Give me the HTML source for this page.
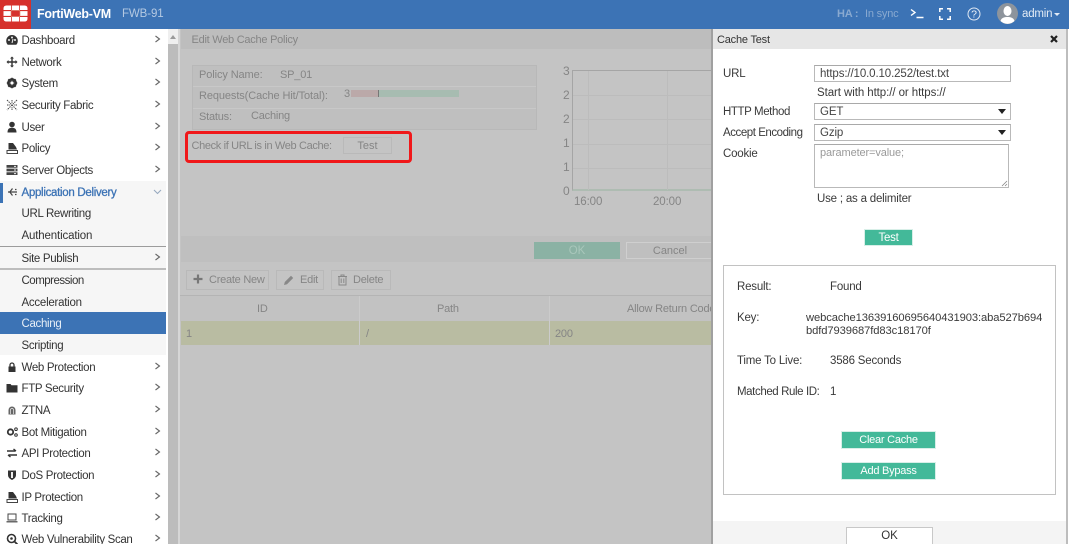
<!DOCTYPE html>
<html><head><meta charset="utf-8"><style>
*{box-sizing:border-box}
html,body{margin:0;padding:0;width:1069px;height:544px;overflow:hidden;background:#fff}
body{position:relative;font-family:"Liberation Sans",sans-serif;font-size:11.5px;color:#3a3a3a}
.a{position:absolute}
.t{position:absolute;white-space:nowrap;line-height:14px;margin-top:1px;letter-spacing:-.2px}
.g{color:#858585}
.m{position:absolute;left:0;width:166px;height:22px;line-height:22px;white-space:nowrap;color:#333;font-size:11.5px;letter-spacing:-.33px}
.m span{position:absolute;left:21.5px;top:1px}
.m svg.i{position:absolute;left:6px;top:5px;width:12px;height:12px}
.m svg.c{position:absolute;left:154px;top:6px;width:7px;height:8px}
.gb{position:absolute;background:#43b999;color:#fff;text-align:center;border:1px solid #d8efe8;white-space:nowrap;letter-spacing:-.25px}
.ib{position:absolute;background:#fff;border:1px solid #b9b9b9;border-top-color:#a9a9a9;padding-left:5px;color:#444;white-space:nowrap;letter-spacing:-.12px}
.tb{position:absolute;top:270px;height:20px;border:1px solid #b9b9b9;color:#858585;line-height:19px;white-space:nowrap;letter-spacing:-.25px}
</style></head><body>
<svg width="0" height="0" style="position:absolute"><defs><path id="ch" d="M1.5 1l4 3-4 3" fill="none" stroke="#666" stroke-width="1.1"/></defs></svg>
<!-- top bar -->
<div class="a" style="left:0;top:0;width:1069px;height:29px;background:#3c73b5"></div>
<div class="a" style="left:0;top:0;width:31px;height:29px;background:#d6302b"></div>
<svg class="a" style="left:3px;top:5px" width="25" height="17" viewBox="0 0 25 17"><path d="M0.500 5V3.500Q.5.500 3.500.500H8V5zM8.800.500H16.200V5H8.800zM17 .500h4.500Q24.500.500 24.500 3.500V5H17zM.5 6.100H7.800V10.900H.5zM17.200 6.100H24.500V10.900H17.200zM.5 12H8V16.500H3.500Q.5 16.500.5 13.500zM8.800 12H16.200V16.500H8.800zM17 12H24.500V13.500Q24.500 16.500 21.500 16.500H17z" fill="#fff"/><path d="M8 5.500h9M8 11.500h9M7.900 6v5M17.100 6v5" stroke="#e8b9a0" stroke-width=".6" fill="none"/></svg>
<div class="t" style="left:37px;top:6px;color:#fff;font-weight:bold;font-size:12.5px;letter-spacing:-.27px">FortiWeb-VM</div>
<div class="t" style="left:122px;top:6px;color:#b4c9e2;font-size:11.5px;letter-spacing:-.1px">FWB-91</div>
<div class="t" style="left:837px;top:6px;color:#89a9d0;font-weight:bold;font-size:11px">HA :</div>
<div class="t" style="left:865px;top:6px;color:#89a9d0;font-size:11px">In sync</div>
<svg class="a" style="left:910px;top:8px" width="14" height="12" viewBox="0 0 14 12"><path d="M1 1.500l4 3-4 3M6.500 9.500h7" fill="none" stroke="#fff" stroke-width="1.400"/></svg>
<svg class="a" style="left:939px;top:8px" width="12" height="12" viewBox="0 0 12 12"><path d="M.8 4V.8H4M8 .8h3.200V4M11.200 8v3.200H8M4 11.200H.8V8" fill="none" stroke="#fff" stroke-width="1.500"/></svg>
<svg class="a" style="left:967px;top:7px" width="14" height="14" viewBox="0 0 14 14"><circle cx="7" cy="7" r="6" fill="none" stroke="#e0e8f3" stroke-width="1"/><text x="7" y="10.700" text-anchor="middle" font-size="10.500" fill="#eef3f9" font-family="Liberation Sans">?</text></svg>
<svg class="a" style="left:997px;top:3px" width="21" height="21" viewBox="0 0 21 21"><circle cx="10.500" cy="10.500" r="10.500" fill="#8d949c"/><ellipse cx="10.500" cy="8" rx="4" ry="5" fill="#fff"/><path d="M3.500 18c1-3.500 4-4 7-4s6 .5 7 4a10 10 0 0 1-14 0z" fill="#fff"/></svg>
<div class="t" style="left:1022px;top:6px;color:#e3ebf5;font-size:11.500px">admin</div>
<div class="a" style="left:1054px;top:13px;border:3px solid transparent;border-top-color:#e3ebf5"></div>

<!-- sidebar -->
<div class="a" style="left:0;top:29px;width:166px;height:515px;background:#fff"></div>
<div class="a" style="left:0;top:181px;width:166px;height:174px;background:#f6f6f6"></div>
<div class="a" style="left:168px;top:29px;width:10px;height:515px;background:#bcbcbc"></div>
<div class="a" style="left:168px;top:29px;width:10px;height:15px;background:#efefef"></div>
<div class="a" style="left:170px;top:35px;border:3px solid transparent;border-bottom:4px solid #9a9a9a;border-top:0"></div>
<div class="a" style="left:178px;top:29px;width:2px;height:515px;background:#d6d6d6"></div>

<div class="m" style="top:29px"><svg class="i" viewBox="0 0 12 12"><path d="M6 1a5.800 5.800 0 0 0-5.800 5.800c0 1.500.5 3 1.500 4h8.600c1-1 1.500-2.500 1.500-4A5.800 5.800 0 0 0 6 1z" fill="#333"/><circle cx="3" cy="6" r="1" fill="#eee"/><circle cx="6" cy="3.500" r="1" fill="#eee"/><circle cx="9" cy="6" r="1" fill="#eee"/><path d="M6 9l1-4" stroke="#eee"/></svg><span>Dashboard</span><svg class="c"><use href="#ch"/></svg></div>
<div class="m" style="top:50.500px"><svg class="i" viewBox="0 0 12 12"><path d="M6 .5L8 2.500H6.700V5.300H9.500V4L11.500 6 9.500 8V6.700H6.700V9.500H8L6 11.500 4 9.500H5.300V6.700H2.500V8L.5 6 2.500 4V5.300H5.300V2.500H4z" fill="#333"/></svg><span>Network</span><svg class="c"><use href="#ch"/></svg></div>
<div class="m" style="top:72px"><svg class="i" viewBox="0 0 12 12"><circle cx="6" cy="6" r="3.700" fill="none" stroke="#333" stroke-width="2.400"/><path d="M6 .8v10.400M.8 6h10.400M2.300 2.300l7.400 7.400M9.700 2.300L2.300 9.700" stroke="#333" stroke-width="1.500"/><circle cx="6" cy="6" r="1.600" fill="#fff"/></svg><span>System</span><svg class="c"><use href="#ch"/></svg></div>
<div class="m" style="top:94px"><svg class="i" viewBox="0 0 12 12"><path d="M1 1l10 10M11 1L1 11M6 1v3M1 6h3M11 6H8M6 11V8" stroke="#444" stroke-width="1" stroke-dasharray="1.500 .8" fill="none"/></svg><span>Security Fabric</span><svg class="c"><use href="#ch"/></svg></div>
<div class="m" style="top:115.500px"><svg class="i" viewBox="0 0 12 12"><circle cx="6" cy="3.500" r="2.800" fill="#333"/><path d="M1.500 11.500c0-4 2-4.800 4.500-4.800s4.500.8 4.500 4.800z" fill="#333"/></svg><span>User</span><svg class="c"><use href="#ch"/></svg></div>
<div class="m" style="top:137px"><svg class="i" viewBox="0 0 12 12"><path d="M2.500 1h4.500l3 4 1 2.500H2.500z" fill="#333"/><path d="M1 8.500h10.500v3H1z" fill="none" stroke="#444"/></svg><span>Policy</span><svg class="c"><use href="#ch"/></svg></div>
<div class="m" style="top:159px"><svg class="i" viewBox="0 0 12 12"><path d="M.5 1h11v2.800H.5zM.5 4.600h11v2.800H.5zM.5 8.200h11V11H.5z" fill="#444"/><path d="M8 2.400h2M8 6h2M8 9.600h2" stroke="#eee"/></svg><span>Server Objects</span><svg class="c"><use href="#ch"/></svg></div>
<div class="a" style="left:0;top:183px;width:3px;height:20px;background:#3c73b5"></div>
<div class="m" style="top:180.500px;color:#3c73b5;letter-spacing:-.3px;-webkit-text-stroke:.3px #3c73b5"><svg class="i" style="-webkit-text-stroke:0" viewBox="0 0 12 12"><path d="M2 6h9M6.500 2.500L3.800 6l2.700 3.500M9 3.500h1.500M9 8.500h1.500" stroke="#444" fill="none" stroke-width="1.200"/></svg><span>Application Delivery</span><svg style="position:absolute;left:153px;top:8px" width="9" height="6"><path d="M1 1l3.500 3.500L8 1" fill="none" stroke="#98a9bf" stroke-width="1.100"/></svg></div>
<div class="m" style="top:202px"><span>URL Rewriting</span></div>
<div class="m" style="top:224px;letter-spacing:-.15px"><span>Authentication</span></div>
<div class="a" style="left:0;top:246px;width:166px;height:1px;background:#9c9c9c"></div>
<div class="m" style="top:246.500px"><span>Site Publish</span><svg class="c"><use href="#ch"/></svg></div>
<div class="a" style="left:0;top:268px;width:166px;height:2px;background:#bdbdbd"></div>
<div class="m" style="top:269px;letter-spacing:-.5px"><span>Compression</span></div>
<div class="m" style="top:290.500px;letter-spacing:-.25px"><span>Acceleration</span></div>
<div class="a" style="left:0;top:312px;width:166px;height:22px;background:#3c73b5"></div>
<div class="m" style="top:312px;color:#e8eff7"><span>Caching</span></div>
<div class="m" style="top:334px"><span>Scripting</span></div>
<div class="a" style="left:0;top:355px;width:166px;height:189px;background:#fff"></div>
<div class="m" style="top:355.500px"><svg class="i" viewBox="0 0 12 12"><path d="M2.500 5.500h7v5.500h-7z" fill="#333"/><path d="M4 5.500V4a2 2 0 0 1 4 0v1.500" fill="none" stroke="#333" stroke-width="1.300"/></svg><span>Web Protection</span><svg class="c"><use href="#ch"/></svg></div>
<div class="m" style="top:377px"><svg class="i" viewBox="0 0 12 12"><path d="M.5 2h4l1 1.300h6V10.500H.5z" fill="#333"/></svg><span>FTP Security</span><svg class="c"><use href="#ch"/></svg></div>
<div class="m" style="top:399px"><svg class="i" viewBox="0 0 12 12"><path d="M2.500 10.500V6a3.500 3.500 0 0 1 7 0v4.500z" fill="#666"/><path d="M4.500 10V6a1.500 1.500 0 0 1 3 0v4" fill="none" stroke="#eee" stroke-width=".7"/></svg><span>ZTNA</span><svg class="c"><use href="#ch"/></svg></div>
<div class="m" style="top:420.500px"><svg class="i" viewBox="0 0 12 12"><circle cx="4.500" cy="6" r="2.700" fill="none" stroke="#333" stroke-width="1.800"/><circle cx="10" cy="3.200" r="1.300" fill="none" stroke="#333"/><circle cx="10" cy="9" r="1.300" fill="none" stroke="#333"/></svg><span>Bot Mitigation</span><svg class="c"><use href="#ch"/></svg></div>
<div class="m" style="top:442px"><svg class="i" viewBox="0 0 12 12"><path d="M1 4h8.500M7.500 2l2.500 2M11 8H2.500M4.500 10L2 8" fill="none" stroke="#333" stroke-width="1.400"/></svg><span>API Protection</span><svg class="c"><use href="#ch"/></svg></div>
<div class="m" style="top:464px"><svg class="i" viewBox="0 0 12 12"><path d="M2 1.500h8V6c0 2.500-2 4-4 5-2-1-4-2.500-4-5z" fill="#333"/><path d="M6 3v6" stroke="#eee" stroke-width="2"/></svg><span>DoS Protection</span><svg class="c"><use href="#ch"/></svg></div>
<div class="m" style="top:485.500px"><svg class="i" viewBox="0 0 12 12"><path d="M2.500 1h4.500l3 4 1 2.500H2.500z" fill="#333"/><path d="M1 8.500h10.500v3H1z" fill="none" stroke="#444"/></svg><span>IP Protection</span><svg class="c"><use href="#ch"/></svg></div>
<div class="m" style="top:507px"><svg class="i" viewBox="0 0 12 12"><path d="M2 2h8v6H2z" fill="none" stroke="#444"/><path d="M.5 9.800h11" stroke="#444" stroke-width="1.200"/></svg><span>Tracking</span><svg class="c"><use href="#ch"/></svg></div>
<div class="m" style="top:528px"><svg class="i" viewBox="0 0 12 12"><circle cx="5.500" cy="5.500" r="4" fill="none" stroke="#333" stroke-width="1.600"/><path d="M8.500 8.500l3 3" stroke="#333" stroke-width="1.800"/><circle cx="5.500" cy="5.500" r="1.300" fill="#333"/></svg><span>Web Vulnerability Scan</span><svg class="c"><use href="#ch"/></svg></div>

<!-- main dimmed content -->
<div class="a" style="left:180px;top:29px;width:533px;height:515px;background:#c4c4c4"></div>
<div class="a" style="left:181px;top:29px;width:532px;height:20px;background:#bdbdbd"></div>
<div class="t g" style="left:191.500px;top:32px;font-size:11px;letter-spacing:-.25px">Edit Web Cache Policy</div>
<div class="a" style="left:192px;top:65px;width:345px;height:65px;border:1px solid #b8b8b8;background:#bfbfbf"></div>
<div class="a" style="left:193px;top:86px;width:343px;height:1px;background:#c8c8c8"></div>
<div class="a" style="left:193px;top:108px;width:343px;height:1px;background:#c8c8c8"></div>
<div class="t g" style="left:199px;top:67px;font-size:11px;letter-spacing:-.1px">Policy Name:</div>
<div class="t g" style="left:280px;top:67px;font-size:11px">SP_01</div>
<div class="t g" style="left:199px;top:88px;font-size:11px;letter-spacing:-.1px">Requests(Cache Hit/Total):</div>
<div class="t g" style="left:344px;top:86px;font-size:11px">3</div>
<div class="a" style="left:351px;top:90px;width:27px;height:7px;background:#bba9a9"></div>
<div class="a" style="left:378px;top:90px;width:1px;height:7px;background:#777"></div>
<div class="a" style="left:379px;top:90px;width:80px;height:7px;background:#a7bcb1"></div>
<div class="t g" style="left:199px;top:109px;font-size:11px">Status:</div>
<div class="t g" style="left:251px;top:108px;font-size:11px">Caching</div>
<div class="t g" style="left:191.500px;top:138px;font-size:11px;letter-spacing:-.35px">Check if URL is in Web Cache:</div>
<div class="a" style="left:343px;top:137px;width:49px;height:17px;border:1px solid #b9b9b9;color:#858585;text-align:center;line-height:16px;font-size:11px">Test</div>
<div class="a" style="left:185px;top:131px;width:227px;height:32px;border:3px solid #f0181a;border-radius:4px"></div>

<!-- chart -->
<div class="a" style="left:572px;top:70px;width:141px;height:121px;border-left:1px solid #a5a5a5;border-top:1px solid #a5a5a5;border-bottom:2px solid #aebcb2"></div>
<div class="a" style="left:573px;top:95px;width:140px;height:1px;background:#bcbcbc"></div>
<div class="a" style="left:573px;top:119px;width:140px;height:1px;background:#bcbcbc"></div>
<div class="a" style="left:573px;top:144px;width:140px;height:1px;background:#bcbcbc"></div>
<div class="a" style="left:573px;top:168px;width:140px;height:1px;background:#bcbcbc"></div>
<div class="a" style="left:588px;top:71px;width:1px;height:119px;background:#bcbcbc"></div>
<div class="a" style="left:667px;top:71px;width:1px;height:119px;background:#bcbcbc"></div>
<div class="t g" style="left:563px;top:63px;font-size:12px">3</div>
<div class="t g" style="left:563px;top:87px;font-size:12px">2</div>
<div class="t g" style="left:563px;top:111px;font-size:12px">2</div>
<div class="t g" style="left:563px;top:135px;font-size:12px">1</div>
<div class="t g" style="left:563px;top:159px;font-size:12px">1</div>
<div class="t g" style="left:563px;top:183px;font-size:12px">0</div>
<div class="t g" style="left:574px;top:194px;font-size:11.500px;letter-spacing:-.1px">16:00</div>
<div class="t g" style="left:653px;top:194px;font-size:11.500px;letter-spacing:-.1px">20:00</div>
<div class="a" style="left:181px;top:236px;width:532px;height:26px;background:#bfbfbf"></div>
<div class="a" style="left:534px;top:242px;width:86px;height:17px;background:#8bb2a4;color:#a9c7bb;text-align:center;line-height:18px">OK</div>
<div class="a" style="left:626px;top:242px;width:87px;height:17px;border:1px solid #cfcfcf;border-right:0;color:#858585;text-align:center;line-height:17px;font-size:11px">Cancel</div>

<!-- table toolbar -->
<div class="tb" style="left:186px;width:83px;padding-left:22px;font-size:11px">Create New</div>
<svg class="a" style="left:193px;top:274px" width="10" height="10"><path d="M5 .5v9M.5 5h9" stroke="#777" stroke-width="2.200"/></svg>
<div class="tb" style="left:276px;width:48px;padding-left:23px;font-size:11px">Edit</div>
<svg class="a" style="left:283px;top:274px" width="12" height="12" viewBox="0 0 12 12"><path d="M1 11l.8-3L8 1.800l2.200 2.200L4 10.200z" fill="#888"/></svg>
<div class="tb" style="left:331px;width:60px;padding-left:21px;font-size:11px">Delete</div>
<svg class="a" style="left:337px;top:274px" width="11" height="12" viewBox="0 0 11 12"><path d="M1 2.500h9M4 2.500V1h3v1.500M2 2.500v8.500h7V2.500M4.200 4.500v4.500M6.800 4.500v4.500" fill="none" stroke="#888"/></svg>

<!-- table -->
<div class="a" style="left:180px;top:295px;width:533px;height:1px;background:#b4b4b4"></div>
<div class="a" style="left:180px;top:296px;width:533px;height:26px;background:#c2c2c2"></div>
<div class="a" style="left:181px;top:321px;width:532px;height:24px;background:#b9bca2"></div>
<div class="a" style="left:359px;top:296px;width:1px;height:49px;background:#cbcbcb"></div>
<div class="a" style="left:549px;top:296px;width:1px;height:49px;background:#cbcbcb"></div>
<div class="t g" style="left:257px;top:301px;font-size:11px">ID</div>
<div class="t g" style="left:437px;top:301px;font-size:11px">Path</div>
<div class="t g" style="left:627px;top:301px;width:86px;overflow:hidden;font-size:11px">Allow Return Code</div>
<div class="t g" style="left:186px;top:326px;font-size:11px">1</div>
<div class="t g" style="left:366px;top:326px;font-size:11px">/</div>
<div class="t g" style="left:555px;top:326px;font-size:11px">200</div>

<!-- modal -->
<div class="a" style="left:711px;top:29px;width:2px;height:515px;background:#a0a0a0"></div>
<div class="a" style="left:713px;top:29px;width:353px;height:515px;background:#fff"></div>
<div class="a" style="left:713px;top:29px;width:353px;height:20px;background:#e6e6e6"></div>
<div class="a" style="left:1066px;top:29px;width:2px;height:515px;background:#bdbdbd"></div>
<div class="t" style="left:717px;top:32px;font-size:11px;color:#333">Cache Test</div>
<svg class="a" style="left:1050px;top:35px" width="8" height="8"><path d="M1 1l6 6M7 1L1 7" stroke="#222" stroke-width="2.200"/></svg>
<div class="t" style="left:723px;top:66px">URL</div>
<div class="ib" style="left:814px;top:65px;width:197px;height:17px;line-height:16px">https://10.0.10.252/test.txt</div>
<div class="t" style="left:817px;top:85px;letter-spacing:-.08px">Start with http:// or https://</div>
<div class="t" style="left:723px;top:104px;letter-spacing:-.4px">HTTP Method</div>
<div class="ib" style="left:814px;top:103px;width:197px;height:17px;line-height:16px">GET</div>
<div class="a" style="left:998px;top:109px;border:4px solid transparent;border-top:5px solid #222;border-bottom:0"></div>
<div class="t" style="left:723px;top:125px;letter-spacing:-.45px">Accept Encoding</div>
<div class="ib" style="left:814px;top:124px;width:197px;height:17px;line-height:16px">Gzip</div>
<div class="a" style="left:998px;top:130px;border:4px solid transparent;border-top:5px solid #222;border-bottom:0"></div>
<div class="t" style="left:723px;top:146px">Cookie</div>
<div class="ib" style="left:814px;top:144px;width:195px;height:44px;line-height:17px;color:#999;font-size:11px">parameter=value;</div>
<svg class="a" style="left:1001px;top:180px" width="7" height="7"><path d="M1 6l5-5M4 6l2-2" stroke="#888" stroke-width=".8"/></svg>
<div class="t" style="left:817px;top:191px">Use ; as a delimiter</div>
<div class="gb" style="left:864px;top:229px;width:49px;height:17px;line-height:16px">Test</div>
<div class="a" style="left:723px;top:265px;width:333px;height:230px;border:1px solid #c2c2c2"></div>
<div class="t" style="left:737px;top:279px">Result:</div>
<div class="t" style="left:830px;top:279px">Found</div>
<div class="t" style="left:737px;top:310px">Key:</div>
<div class="t" style="left:806px;top:310px;font-size:11.200px;letter-spacing:-.1px">webcache13639160695640431903:aba527b694</div>
<div class="t" style="left:806px;top:323px;font-size:11.200px;letter-spacing:-.1px">bdfd7939687fd83c18170f</div>
<div class="t" style="left:737px;top:353px">Time To Live:</div>
<div class="t" style="left:830px;top:353px">3586 Seconds</div>
<div class="t" style="left:737px;top:384px;letter-spacing:-.4px">Matched Rule ID:</div>
<div class="t" style="left:830px;top:384px">1</div>
<div class="gb" style="left:841px;top:431px;width:95px;height:18px;line-height:17px;font-size:11px">Clear Cache</div>
<div class="gb" style="left:841px;top:462px;width:95px;height:18px;line-height:17px;font-size:11px">Add Bypass</div>
<div class="a" style="left:713px;top:521px;width:353px;height:23px;background:#f4f4f4"></div>
<div class="a" style="left:846px;top:527px;width:87px;height:17px;background:#fff;border:1px solid #c8c8c8;border-bottom:0;text-align:center;line-height:17px;color:#333">OK</div>
</body></html>
